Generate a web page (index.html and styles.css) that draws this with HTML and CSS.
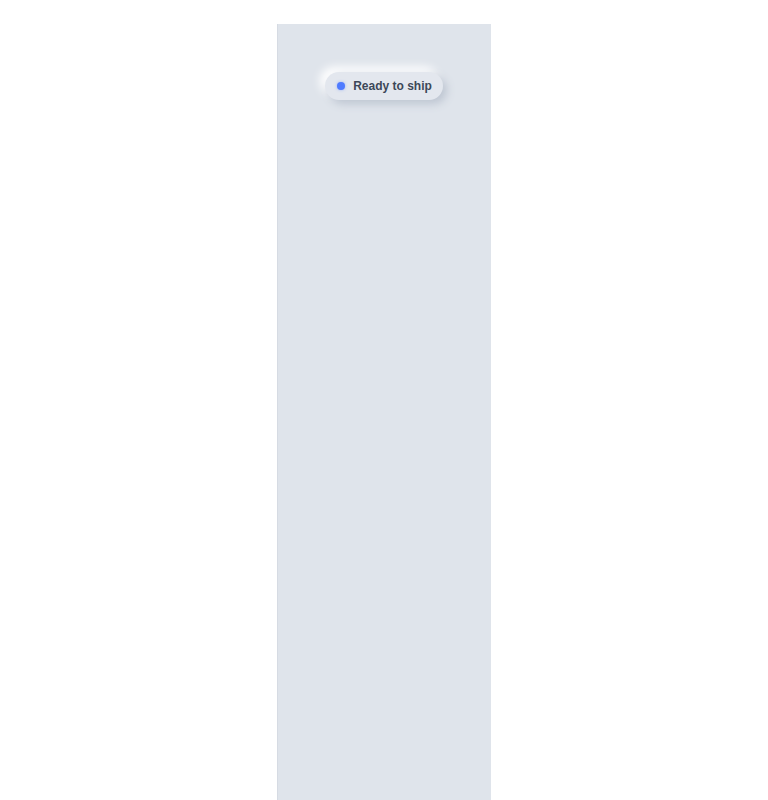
FILE: index.html
```html
<!DOCTYPE html>
<html>
<head>
<meta charset="utf-8">
<link rel="stylesheet" href="styles.css">
</head>
<body>
<div class="page">
  <div class="panel">
    <div class="pill">
      <span class="dot"></span>
      <span class="label">Ready to ship</span>
    </div>
  </div>
</div>
</body>
</html>
```
FILE: styles.css
```css
html, body {
  margin: 0;
  padding: 0;
  background: #ffffff;
}
.page {
  display: flex;
  justify-content: center;
  padding-top: 24px;
}
.panel {
  width: 214px;
  min-height: 800px;
  background: #dfe4eb;
  box-shadow: inset 1px 0 0 #d6dbe3;
  display: flex;
  flex-direction: column;
  align-items: center;
  padding-top: 48px;
  box-sizing: border-box;
}
.pill {
  display: flex;
  align-items: center;
  gap: 8px;
  height: 28px;
  padding: 0 11px 0 12px;
  border-radius: 14px;
  background: #e3e7ee;
  box-shadow: 4px 4px 8px #bec6d2, -5px -5px 10px #ffffff;
  box-sizing: border-box;
}
.dot {
  width: 8px;
  height: 8px;
  border-radius: 50%;
  background: #4f7bff;
  box-shadow: 0 0 3px rgba(79, 123, 255, 0.5);
}
.label {
  font-family: "Liberation Sans", Arial, sans-serif;
  font-weight: 700;
  font-size: 12px;
  color: #3c4758;
}
```
